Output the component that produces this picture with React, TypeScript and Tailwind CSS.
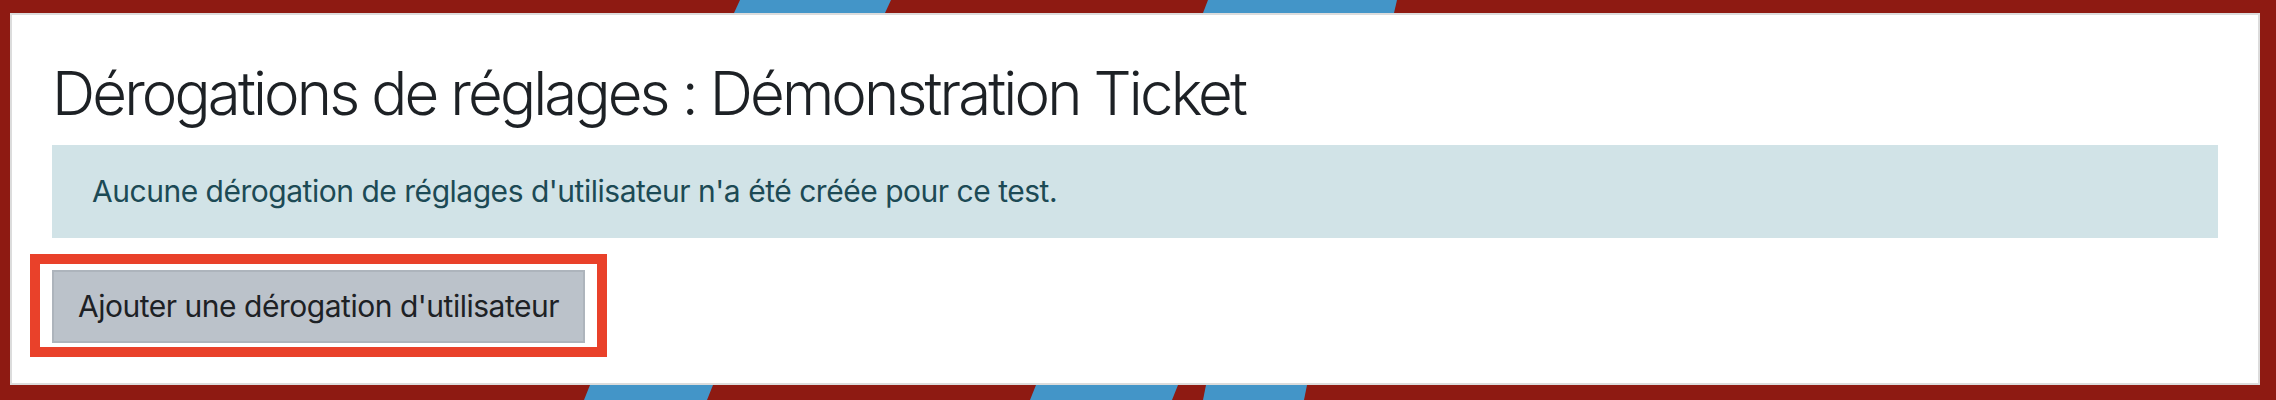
import React from "react";

export default function App() {
  return (
    <div className="relative w-[2276px] h-[400px] bg-[#8e1a12] pt-[13px] pl-[10px] pr-[16px] pb-[15px] font-['Inter','Liberation_Sans',sans-serif]">
      <svg
        className="absolute inset-0 w-[2276px] h-[400px]"
        viewBox="0 0 2276 400"
        preserveAspectRatio="none"
      >
        <polygon points="740,0 891,0 885,13 734,13" fill="#4395c8" />
        <polygon points="1208,0 1397,0 1394,13 1203,13" fill="#4395c8" />
        <polygon points="590,385 713,385 707,400 584,400" fill="#4395c8" />
        <polygon points="1036,385 1178,385 1172,400 1030,400" fill="#4395c8" />
        <polygon points="1206,385 1307,385 1304,400 1203,400" fill="#4395c8" />
      </svg>
      <div className="relative h-full border-2 border-[#dcdcdc] bg-white pt-[42px] px-[40px]">
        <h2 className="text-[60px] leading-[72px] font-light text-[#1d2125] tracking-[-0.048em] mb-[16px]">
          Dérogations de réglages : Démonstration Ticket
        </h2>
        <div className="bg-[#d1e3e7] text-[#1c4a55] text-[30px] leading-[45px] tracking-[-0.016em] py-[24px] px-[40px] mb-[32px]">
          Aucune dérogation de réglages d'utilisateur n'a été créée pour ce test.
        </div>
        <div className="relative inline-block">
          <div className="absolute left-[-22px] top-[-16px] right-[-22px] bottom-[-14px] border-[10px] border-[#e9412a]" />
          <button className="relative bg-[#bbc2ca] border-2 border-[#adb4bc] text-[#1d2125] text-[30px] leading-[45px] tracking-[-0.016em] px-[24px] py-[12px]">
            Ajouter une dérogation d'utilisateur
          </button>
        </div>
      </div>
    </div>
  );
}
